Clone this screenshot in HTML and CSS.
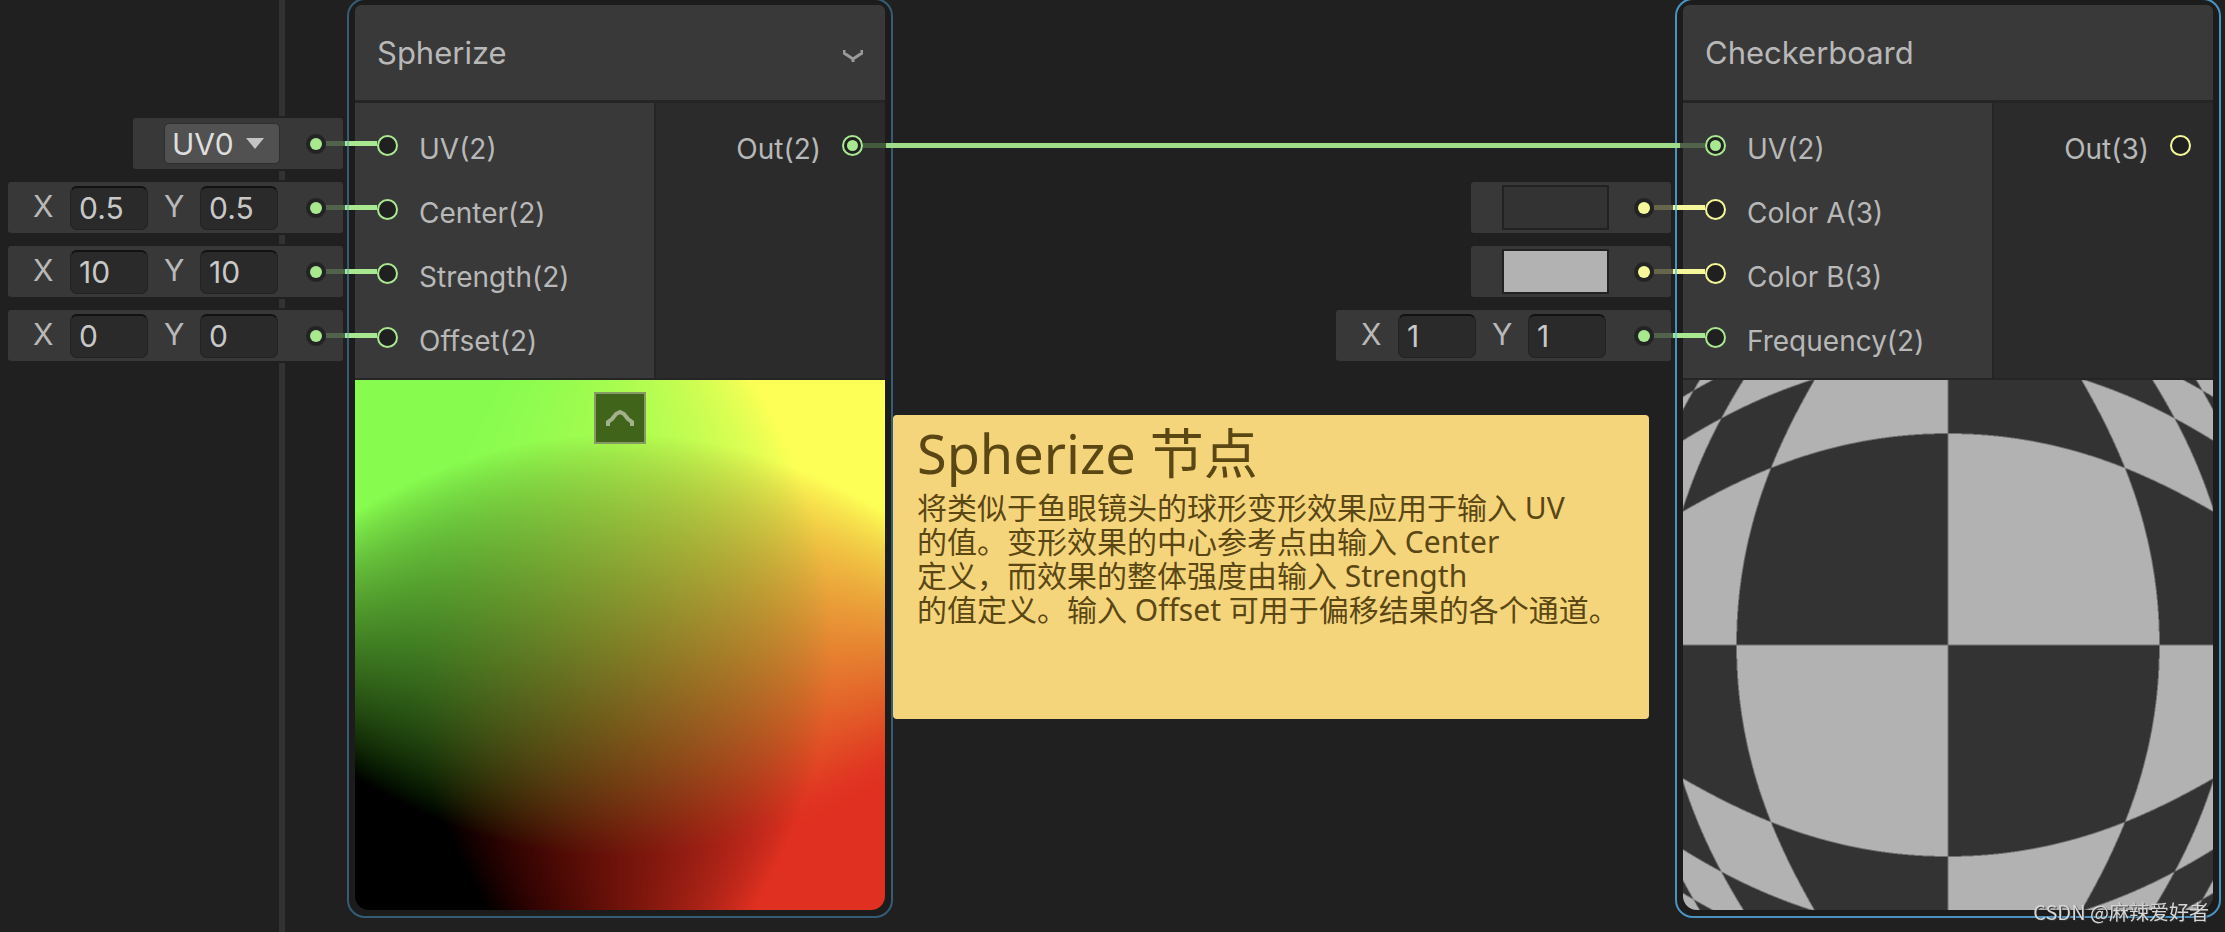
FILE: index.html
```html
<!DOCTYPE html>
<html lang="zh-CN">
<head>
<meta charset="utf-8">
<title>Shader Graph</title>
<link rel="stylesheet" href="styles.css">
</head>
<body>
<main class="graph">
  <div class="grid-line"></div>

  <section class="node node-spherize">
    <div class="slots">
      <div class="slot slot-select">
        <select class="channel" aria-label="UV channel"><option>UV0</option></select>
        <svg class="caret" viewBox="0 0 18 11"><path d="M0 0H18L9 11Z"/></svg>
        <span class="plug"></span><span class="link"></span>
      </div>
      <div class="slot">
        <label for="cx">X</label><input id="cx" class="field" value="0.5">
        <label for="cy">Y</label><input id="cy" class="field" value="0.5">
        <span class="plug"></span><span class="link"></span>
      </div>
      <div class="slot">
        <label for="sx">X</label><input id="sx" class="field" value="10">
        <label for="sy">Y</label><input id="sy" class="field" value="10">
        <span class="plug"></span><span class="link"></span>
      </div>
      <div class="slot">
        <label for="ox">X</label><input id="ox" class="field" value="0">
        <label for="oy">Y</label><input id="oy" class="field" value="0">
        <span class="plug"></span><span class="link"></span>
      </div>
    </div>
    <article class="card">
      <header class="card-header">
        <h2>Spherize</h2>
        <button class="collapse" aria-label="Collapse"><svg viewBox="0 0 20 13"><path d="M1 1V4L4 6L7 8L10 10L13 8L16 6L19 4V1M10 8V13"/></svg></button>
      </header>
      <div class="ports">
        <ul class="inputs">
          <li><i class="port"></i><span>UV(2)</span></li>
          <li><i class="port"></i><span>Center(2)</span></li>
          <li><i class="port"></i><span>Strength(2)</span></li>
          <li><i class="port"></i><span>Offset(2)</span></li>
        </ul>
        <ul class="outputs">
          <li><span>Out(2)</span><i class="port connected"></i></li>
        </ul>
      </div>
      <div class="preview">
        <canvas id="spherize" width="530" height="530"></canvas>
        <button class="preview-toggle" aria-label="Hide preview"><svg viewBox="0 0 28 18"><path d="M2 17V13L6 10L10 5L14 3L18 5L22 10L26 13V17"/></svg></button>
      </div>
    </article>
  </section>

  <section class="node node-checker">
    <div class="slots">
      <div class="slot slot-empty"></div>
      <div class="slot slot-color yellow">
        <input type="color" class="swatch" aria-label="Color A" value="#333333">
        <span class="plug"></span><span class="link"></span>
      </div>
      <div class="slot slot-color yellow">
        <input type="color" class="swatch" aria-label="Color B" value="#b2b2b2">
        <span class="plug"></span><span class="link"></span>
      </div>
      <div class="slot">
        <label for="fx">X</label><input id="fx" class="field" value="1">
        <label for="fy">Y</label><input id="fy" class="field" value="1">
        <span class="plug"></span><span class="link"></span>
      </div>
    </div>
    <article class="card">
      <header class="card-header"><h2>Checkerboard</h2></header>
      <div class="ports">
        <ul class="inputs">
          <li><i class="port connected"></i><span>UV(2)</span></li>
          <li class="yellow"><i class="port"></i><span>Color A(3)</span></li>
          <li class="yellow"><i class="port"></i><span>Color B(3)</span></li>
          <li><i class="port"></i><span>Frequency(2)</span></li>
        </ul>
        <ul class="outputs">
          <li class="yellow"><span>Out(3)</span><i class="port"></i></li>
        </ul>
      </div>
      <div class="preview"><canvas id="checker" width="530" height="530"></canvas></div>
    </article>
  </section>

  <div class="wire"></div>

  <aside class="note">
    <h3>Spherize 节点</h3>
    <p>将类似于鱼眼镜头的球形变形效果应用于输入 UV<br>的值。变形效果的中心参考点由输入 Center<br>定义，而效果的整体强度由输入 Strength<br>的值定义。输入 Offset 可用于偏移结果的各个通道。</p>
  </aside>

  <p class="watermark">CSDN @麻辣爱好者</p>
</main>
<script src="preview.js"></script>
</body>
</html>
```

FILE: styles.css
```css
* { box-sizing: border-box; }

body {
  margin: 0;
  background: #202020;
  color: #b8b8b8;
  font-family: Inter, "Noto Sans CJK SC", sans-serif;
  font-size: 28px;
}

h2, h3, p, ul { margin: 0; padding: 0; font-weight: 400; }
ul { list-style: none; }

.graph {
  --tone: #a8e890;
  --tone-dim: #51634b;
  --tone-dark: #435a3c;
  position: relative;
  height: 100vh;
  overflow: hidden;
}

.yellow {
  --tone: #f6f79a;
  --tone-dim: #66664c;
}

.grid-line {
  position: absolute;
  left: 279px;
  top: 0;
  bottom: 0;
  width: 6px;
  background: #323232;
}

/* nodes */
.node {
  position: absolute;
  top: -2px;
  display: flex;
  gap: 4px;
  align-items: flex-start;
}
.node-spherize { left: 8px; --edge: #345d75; --edge-lit: #79c5b0; }
.node-checker { left: 1336px; --edge: #4a92c0; --edge-lit: #7ac8dc; }

.card {
  width: 546px;
  padding: 5px 6px 6px;
  border: 2px solid var(--edge);
  border-radius: 18px;
  background: #1c1c1c;
}

.card-header {
  display: flex;
  align-items: center;
  justify-content: space-between;
  height: 98px;
  padding: 0 22px;
  border-bottom: 3px solid #252525;
  border-radius: 6px 6px 0 0;
  background: #393939;
}
.card-header h2 { font-size: 31px; }

.collapse {
  width: 20px;
  padding: 5px 0 0;
  border: 0;
  background: none;
}
.collapse svg { display: block; fill: none; stroke: #9a9a9a; stroke-width: 3; }

.ports {
  display: flex;
  height: 277px;
  border-bottom: 2px solid #252525;
  background: #2b2b2b;
}
.inputs, .outputs { padding: 10px 22px 0; }
.inputs { width: 301px; background: #393939; border-right: 2px solid #252525; }
.node-checker .inputs { width: 311px; }
.outputs { flex: 1; }
.ports li { display: flex; align-items: center; gap: 21px; height: 64px; }
.ports span { padding-top: 8px; }
.outputs li { justify-content: flex-end; }

.port {
  display: grid;
  place-items: center;
  width: 21px;
  height: 21px;
  border: 2px solid var(--tone);
  border-radius: 50%;
  background: #202020;
}
.connected::after {
  content: "";
  width: 11px;
  height: 11px;
  border-radius: 50%;
  background: var(--tone);
}

.preview { position: relative; }
.preview canvas {
  display: block;
  width: 100%;
  border-radius: 0 0 14px 14px;
}
.preview-toggle {
  position: absolute;
  top: 12px;
  left: 50%;
  display: grid;
  place-items: center;
  width: 52px;
  height: 52px;
  margin-left: -26px;
  padding: 0;
  border: 2px solid #869a66;
  background: #41641b;
}
.preview-toggle svg { width: 28px; fill: none; stroke: #a2b18c; stroke-width: 4; }

/* inline value slots */
.slots {
  position: relative;
  z-index: 1;
  display: flex;
  flex-direction: column;
  align-items: flex-end;
  gap: 13px;
  width: 335px;
  padding-top: 120px;
}
.slot {
  position: relative;
  display: flex;
  align-items: center;
  width: 335px;
  height: 51px;
  padding: 0 17px 0 25px;
  border-radius: 3px;
  background: #383838;
  box-shadow: 0 0 0 2px #202020;
  font-size: 30px;
}
.slot-select { width: 210px; padding-left: 31px; }
.slot-color { width: 200px; padding-left: 31px; }
.slot-empty { visibility: hidden; }
.slot label { width: 37px; padding-bottom: 4px; }
.slot .field + label { width: 36px; }

.field {
  width: 78px;
  height: 44px;
  padding: 0 8px;
  border: 1px solid #222;
  border-top: 2px solid #111;
  border-radius: 7px;
  background: #2a2a2a;
  color: #c8c8c8;
  font: inherit;
}
.field + label { margin-left: 16px; }

.channel {
  appearance: none;
  width: 116px;
  height: 41px;
  padding: 0 7px;
  border: 1px solid #2e2e2e;
  border-radius: 5px;
  background: #515151;
  color: #dedede;
  font: inherit;
}
.caret {
  position: absolute;
  right: 79px;
  width: 18px;
  height: 11px;
  fill: #c4c4c4;
}

.swatch {
  appearance: none;
  width: 107px;
  height: 45px;
  padding: 0;
  border: 2px solid #222;
  background: none;
}
.swatch::-webkit-color-swatch-wrapper { padding: 0; }
.swatch::-webkit-color-swatch { border: 0; border-radius: 0; }

.plug {
  display: grid;
  place-items: center;
  width: 20px;
  height: 20px;
  margin-left: auto;
  border-radius: 50%;
  background: #232323;
}
.plug::after {
  content: "";
  width: 12px;
  height: 12px;
  border-radius: 50%;
  background: var(--tone);
}
.link {
  position: absolute;
  right: -34px;
  width: 51px;
  height: 5px;
  background: linear-gradient(90deg,
    var(--tone-dim) 19px, var(--tone) 19px 21px,
    var(--edge-lit) 21px 23px, var(--tone) 23px);
}

.wire {
  position: absolute;
  left: 863px;
  top: 143px;
  width: 842px;
  height: 5px;
  background: linear-gradient(90deg,
    var(--tone-dark) 23px, #9fdd88 23px 817px, var(--tone-dim) 817px);
}

/* sticky note */
.note {
  position: absolute;
  left: 893px;
  top: 415px;
  width: 756px;
  height: 304px;
  padding: 0 24px;
  border-radius: 4px;
  background: #f5d57c;
  color: #5a4714;
  font-family: "Noto Sans", "Noto Sans CJK SC", sans-serif;
}
.note h3 { font-size: 54px; line-height: 76px; }
.note p { font-size: 30px; line-height: 34px; white-space: nowrap; }

.watermark {
  position: absolute;
  right: 16px;
  bottom: 6px;
  color: #d6d6d6;
  font: 20px/28px "Noto Sans CJK SC", sans-serif;
  text-shadow: 1px 1px 1px #333;
}
```

FILE: preview.js
```js
// Spherize: centre 0.5, strength 10, offset 0
function spherize(u, v) {
  const dx = u - 0.5, dy = v - 0.5;
  const d2 = dx * dx + dy * dy;
  const k = 1 + d2 * d2 * 10;
  return [0.5 + dx * k, 0.5 + dy * k];
}

function paint(id, shade) {
  const canvas = document.getElementById(id);
  const n = canvas.width;
  const ctx = canvas.getContext('2d');
  const img = ctx.createImageData(n, n);
  for (let y = 0; y < n; y++) {
    for (let x = 0; x < n; x++) {
      const c = shade(x, y, n);
      const i = (y * n + x) * 4;
      img.data[i] = c[0];
      img.data[i + 1] = c[1];
      img.data[i + 2] = c[2];
      img.data[i + 3] = 255;
    }
  }
  ctx.putImageData(img, 0, 0);
}

const clamp = t => Math.min(1, Math.max(0, t));
const toLinear = t => t <= 0.04045 ? t / 12.92 : Math.pow((t + 0.055) / 1.055, 2.4);
const toSrgb = t => 255 * (t <= 0.0031308 ? t * 12.92 : 1.055 * Math.pow(t, 1 / 2.4) - 0.055);

paint('spherize', (x, y, n) => {
  const [u, v] = spherize((x + 0.5) / n, 1 - (y + 0.5) / n);
  const r = toLinear(clamp(u)), g = toLinear(clamp(v));
  return [
    toSrgb(0.745 * r + 0.242 * g),
    toSrgb(0.03 * r + 0.97 * g),
    toSrgb(0.015 * r + 0.077 * g)
  ];
});

// 4x4 samples per pixel keep the cell edges smooth
paint('checker', (x, y, n) => {
  let light = 0;
  for (let a = 0; a < 4; a++) {
    for (let b = 0; b < 4; b++) {
      const [u, v] = spherize((x + a / 2 - 0.25) / n, 1 - (y + b / 2 - 0.25) / n);
      if ((Math.floor(u * 2) + Math.floor(v * 2)) % 2 === 0) light++;
    }
  }
  const c = 51 + 127 * light / 16;
  return [c, c, c];
});
```
